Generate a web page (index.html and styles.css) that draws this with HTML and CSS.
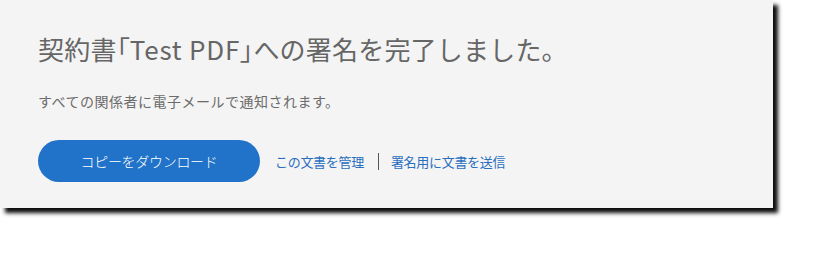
FILE: index.html
```html
<!DOCTYPE html>
<html lang="ja">
<head>
<meta charset="utf-8">
<link rel="stylesheet" href="styles.css">
</head>
<body>
<div class="page">
  <div class="card">
    <h1 class="title">契約書<span class="br">「</span><span class="latin">Test PDF</span><span class="br">」</span>への署名を完了しました。</h1>
    <p class="sub">すべての関係者に電子メールで通知されます。</p>
    <div class="actions">
      <button class="btn">コピーをダウンロード</button>
      <a class="link" href="#">この文書を管理</a>
      <span class="sep"></span>
      <a class="link" href="#">署名用に文書を送信</a>
    </div>
  </div>
</div>
</body>
</html>
```

FILE: styles.css
```css
html, body {
  margin: 0;
  padding: 0;
  background: #ffffff;
}
body {
  font-family: "Noto Sans CJK JP", "Noto Sans", sans-serif;
}
.page {
  min-height: 267px;
  padding: 0 0 30px 0;
  box-sizing: border-box;
}
.card {
  width: 773px;
  height: 208px;
  box-sizing: border-box;
  background: #f4f4f4;
  box-shadow: 5px 5px 4px rgba(0, 0, 0, 0.95);
  padding: 30px 0 0 38px;
}
.title {
  margin: 0;
  font-size: 26px;
  font-weight: 400;
  line-height: 38px;
  color: #666666;
  letter-spacing: 0.2px;
}
.br {
  font-feature-settings: "palt" 1;
}
.latin {
  letter-spacing: 0.8px;
}
.sub {
  margin: 23px 0 0 0;
  font-size: 14px;
  line-height: 20px;
  color: #6b6b6b;
  letter-spacing: 0.5px;
}
.actions {
  margin-top: 29px;
  display: flex;
  align-items: center;
}
.btn {
  width: 222px;
  height: 42px;
  border: none;
  border-radius: 21px;
  background: #2073c8;
  color: #ffffff;
  font-family: inherit;
  font-size: 14px;
  font-weight: 300;
  letter-spacing: -0.3px;
  padding: 0;
}
.link {
  color: #2a6fbf;
  text-decoration: none;
  font-size: 13px;
  letter-spacing: -0.3px;
}
.btn + .link {
  margin-left: 15px;
}
.sep {
  width: 1px;
  height: 17px;
  background: #555555;
  margin: 0 12px 0 14px;
}
```
